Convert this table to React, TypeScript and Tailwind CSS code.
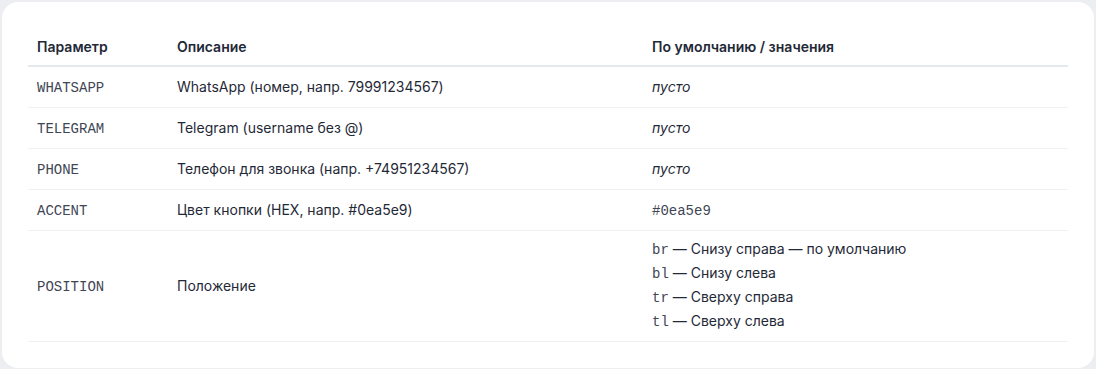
import React from "react";

const mono = "[font-family:'Liberation_Mono','Courier_New',monospace] text-[14px] leading-none text-[#3f4654]";

const rows: { key: string; desc: string; value: React.ReactNode }[] = [
  { key: "WHATSAPP", desc: "WhatsApp (номер, напр. 79991234567)", value: <em>пусто</em> },
  { key: "TELEGRAM", desc: "Telegram (username без @)", value: <em>пусто</em> },
  { key: "PHONE", desc: "Телефон для звонка (напр. +74951234567)", value: <em>пусто</em> },
  { key: "ACCENT", desc: "Цвет кнопки (HEX, напр. #0ea5e9)", value: <code className={mono}>#0ea5e9</code> },
];

const positions = [
  ["br", "Снизу справа — по умолчанию"],
  ["bl", "Снизу слева"],
  ["tr", "Сверху справа"],
  ["tl", "Сверху слева"],
];

export default function App() {
  return (
    <div className="min-h-[369px] bg-[#eceef2] p-[2px] font-['Inter',sans-serif] text-[14px] text-[#1f2937]">
      <div className="rounded-2xl bg-white p-[26px]">
        <table className="w-full border-collapse text-left">
          <thead>
            <tr className="border-b-2 border-[#e5e8ee]">
              <th className="w-[140px] px-[9px] pt-[9px] pb-[8px] font-semibold leading-5">Параметр</th>
              <th className="w-[475px] px-[9px] pt-[9px] pb-[8px] font-semibold leading-5">Описание</th>
              <th className="px-[9px] pt-[9px] pb-[8px] font-semibold leading-5">По умолчанию / значения</th>
            </tr>
          </thead>
          <tbody>
            {rows.map((r) => (
              <tr key={r.key} className="border-b border-[#eef0f3]">
                <td className="px-[9px] py-[10px] leading-5">
                  <code className={mono}>{r.key}</code>
                </td>
                <td className="px-[9px] py-[10px] leading-5">{r.desc}</td>
                <td className="px-[9px] py-[10px] leading-5">{r.value}</td>
              </tr>
            ))}
            <tr className="border-b border-[#eef0f3]">
              <td className="px-[9px] py-[10px] leading-5">
                <code className={mono}>POSITION</code>
              </td>
              <td className="px-[9px] py-[10px] leading-5">Положение</td>
              <td className="px-[9px] pt-[8px] pb-[10px] leading-5">
                <div className="flex flex-col gap-1">
                  {positions.map(([k, v]) => (
                    <div key={k}>
                      <code className={mono}>{k}</code> — {v}
                    </div>
                  ))}
                </div>
              </td>
            </tr>
          </tbody>
        </table>
      </div>
    </div>
  );
}
